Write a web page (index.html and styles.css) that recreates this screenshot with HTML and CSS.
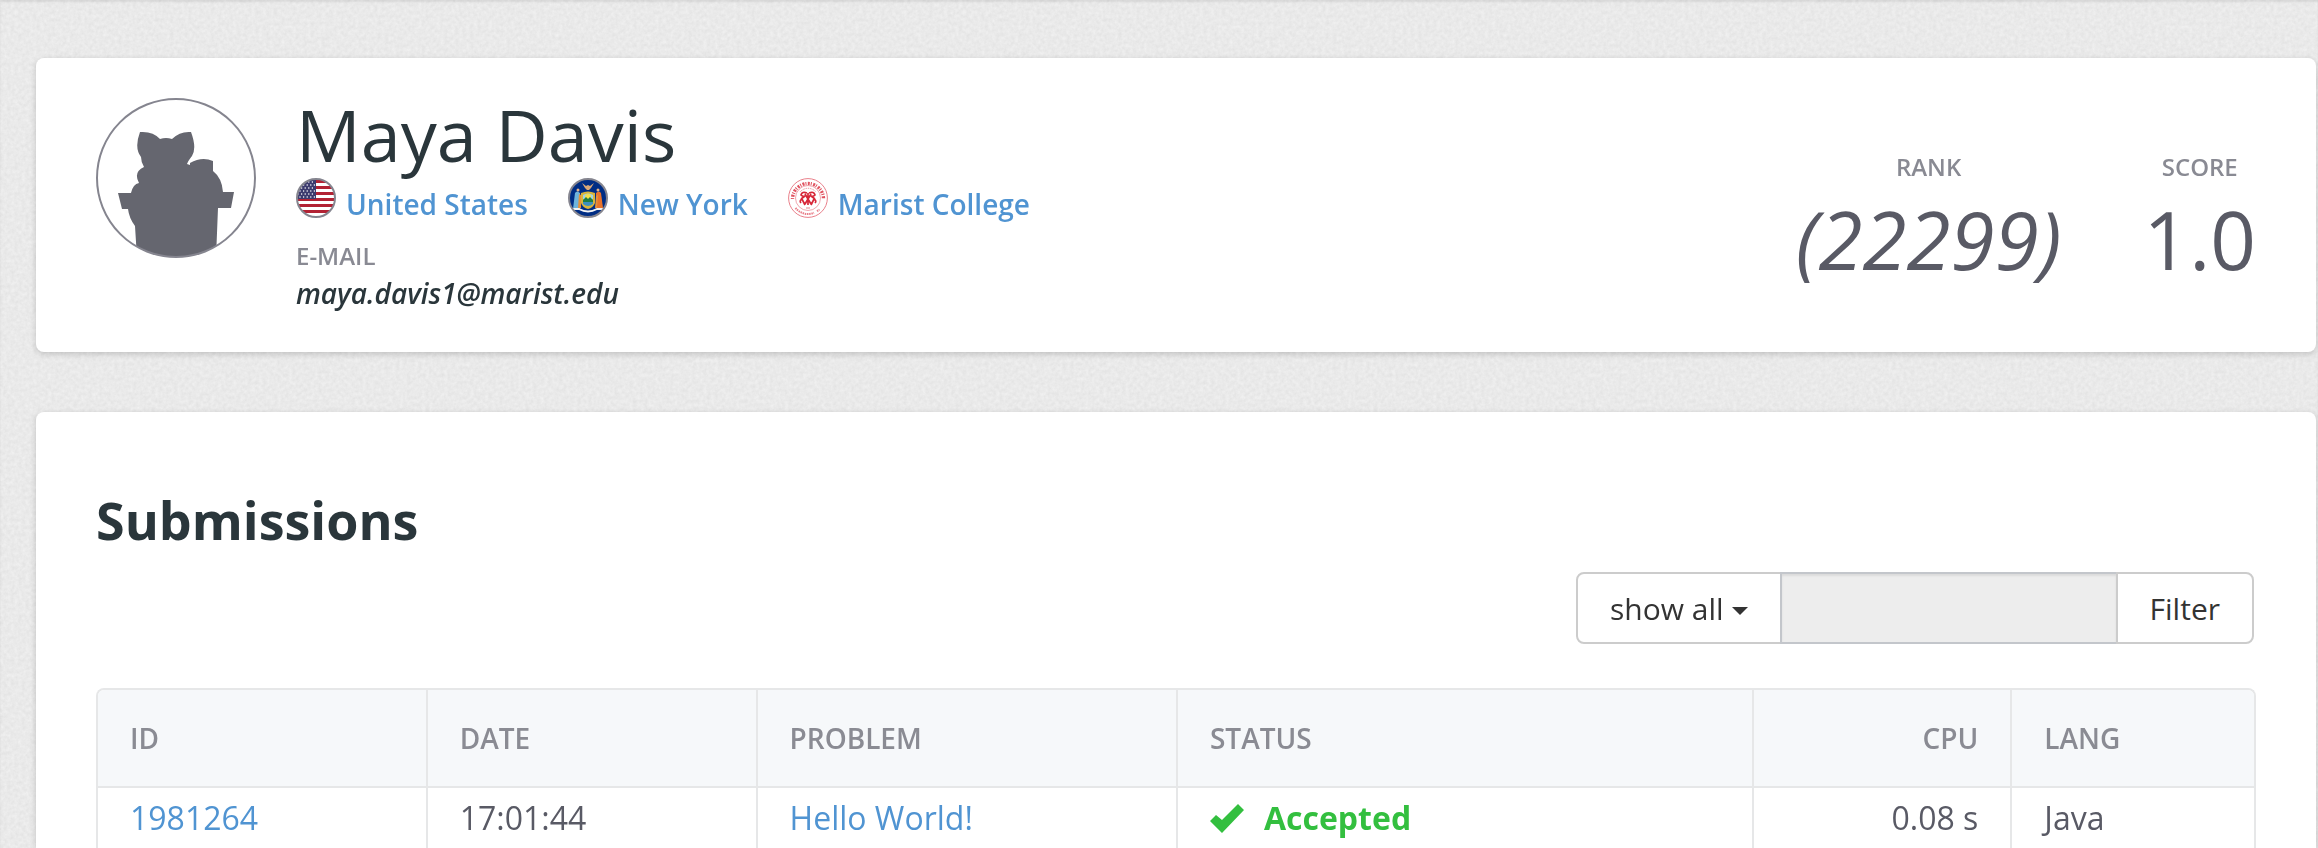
FILE: index.html
```html
<!DOCTYPE html>
<html lang="en">
<head>
<meta charset="utf-8">
<title>Maya Davis</title>
<link rel="stylesheet" href="styles.css">
</head>
<body>
<svg class="texture" aria-hidden="true">
  <filter id="grain" x="0" y="0" width="100%" height="100%" color-interpolation-filters="sRGB">
    <feTurbulence type="fractalNoise" baseFrequency="0.27" numOctaves="3" seed="4"/>
    <feColorMatrix type="matrix" values="0.07 0 0 0 0.881  0.07 0 0 0 0.881  0.07 0 0 0 0.881  0 0 0 0 1"/>
  </filter>
  <rect width="100%" height="100%" filter="url(#grain)"/>
</svg>
<main class="page">
  <section class="card profile">
    <svg class="avatar" viewBox="0 0 160 160" role="img" aria-label="Profile picture">
      <defs><clipPath id="round"><circle cx="80" cy="80" r="79"/></clipPath></defs>
      <path clip-path="url(#round)" fill="#65666f" d="M44 34Q57 33 64 41Q70 39 76 41Q84 33 95 34Q101 50 96 58Q92 63 91 66L94 67L94 65Q106 58 117 63V73Q126 80 127 94H138L135 110H122L120 160H41L39 128Q33 120 32 111H26L22 95L35 95Q37 86 43 85Q37 74 48 69Q45 64 45 59Q38 50 44 34Z"/>
      <circle cx="80" cy="80" r="79" fill="none" stroke="#85858f" stroke-width="2"/>
    </svg>
    <div class="identity">
      <h1 class="name">Maya Davis</h1>
      <ul class="places">
        <li class="place">
          <svg class="flag" viewBox="0 0 40 40" aria-hidden="true">
            <defs><clipPath id="disc"><circle cx="20" cy="20" r="19"/></clipPath></defs>
            <g clip-path="url(#disc)">
              <rect width="40" height="40" fill="#fff"/>
              <path stroke="#b22234" stroke-width="3" d="M0 3.5H40M0 9.5H40M0 15.5H40M0 21.5H40M0 27.5H40M0 33.5H40M0 39.5H40"/>
              <rect width="20" height="21" fill="#3c3b6e"/>
              <path stroke="#fff" stroke-width="1.5" stroke-linecap="round" stroke-dasharray="0 3.6" d="M2 4H19M4 7H19M2 10H19M4 13H19M2 16H19M4 19H19"/>
            </g>
            <circle cx="20" cy="20" r="19" fill="none" stroke="#85858f" stroke-width="2"/>
          </svg>
          <a class="place-link" href="#">United States</a>
        </li>
        <li class="place">
          <svg class="flag" viewBox="0 0 40 40" aria-hidden="true">
            <circle cx="20" cy="20" r="19" fill="#002d84"/>
            <path fill="#d9a878" d="M14 5L18 8L20 7L22 8L26 5L23 10L21 12H19L17 10Z"/>
            <path fill="#d9b53c" d="M13 15Q20 12 27 15V25Q25 30 20 31Q15 30 13 25Z"/>
            <path fill="#9fd4e6" d="M15 17Q20 14 25 17V21H15Z"/>
            <circle cx="20" cy="19" r="3" fill="#f5e04a"/>
            <path fill="#1e7d45" d="M15 22L18 19L20 21L22 19L25 22V24H15Z"/>
            <path fill="#3a8fc0" d="M15 24H25V26Q20 30 15 26Z"/>
            <path fill="#6fb4dc" d="M7 15Q9 12 12 15L12 31H5Z"/>
            <path fill="#e8742c" d="M28 15Q31 12 33 15L35 30H28Z"/>
            <path fill="#e6913a" d="M11 16L13 17V30H10ZM28 18L30 17L29 30H27Z"/>
            <circle cx="10" cy="12" r="1.5" fill="#e5b48c"/><circle cx="30" cy="12" r="1.5" fill="#e5b48c"/>
            <path fill="none" stroke="#f4f4f4" stroke-width="2" d="M4 31H11Q20 36 29 31H36"/>
            <circle cx="20" cy="20" r="19" fill="none" stroke="#85858f" stroke-width="2"/>
          </svg>
          <a class="place-link" href="#">New York</a>
        </li>
        <li class="place">
          <svg class="flag" viewBox="0 0 40 40" aria-hidden="true">
            <g fill="none" stroke="#e9808b">
              <circle cx="20" cy="20" r="19.4" stroke-width="1"/>
              <path stroke="#e0525f" stroke-width="3.4" stroke-dasharray="1 1.4 2 1" d="M4.500 21A15.500 15.500 0 1 1 35.500 21"/>
              <path stroke-width="2" stroke-dasharray="1.500 .7" d="M7.500 30A16 16 0 0 0 26 34.800M29 33.200L31.500 31.500"/>
              <circle cx="20" cy="20" r="12.500" stroke-width=".7"/>
              <path stroke-width="1" stroke-dasharray="1 .8" d="M12 14A10.500 10.500 0 0 1 28 14"/>
            </g>
            <path fill="none" stroke="#d72638" stroke-width="1.700" d="M19 15Q14 13 13 17Q15 19 17 18L13 21M21 15Q26 13 27 17Q25 19 23 18L27 21M17 16L23 26M23 16L17 26M13 25Q11 23 14 21L17 27M27 25Q29 23 26 21L23 27M20 15V27"/>
            <path stroke="#e9808b" d="M18 30H22"/>
          </svg>
          <a class="place-link" href="#">Marist College</a>
        </li>
      </ul>
      <dl class="contact">
        <dt class="label">E-MAIL</dt>
        <dd class="email">maya.davis1@marist.edu</dd>
      </dl>
    </div>
    <dl class="stats">
      <div class="stat"><dt class="label">RANK</dt><dd class="figure figure-unranked">(22299)</dd></div>
      <div class="stat"><dt class="label">SCORE</dt><dd class="figure">1.0</dd></div>
    </dl>
  </section>

  <section class="card submissions">
    <h2 class="heading">Submissions</h2>
    <form class="filter">
      <button class="filter-button filter-menu" type="button">show all <span class="caret"></span></button>
      <input class="filter-input" type="text" aria-label="Filter value" disabled>
      <button class="filter-button filter-submit" type="submit">Filter</button>
    </form>
    <div class="table-frame">
      <table class="table">
        <colgroup><col class="col-id"><col class="col-date"><col class="col-problem"><col class="col-status"><col class="col-cpu"><col class="col-lang"></colgroup>
        <thead>
          <tr><th>ID</th><th>DATE</th><th>PROBLEM</th><th>STATUS</th><th class="numeric">CPU</th><th>LANG</th></tr>
        </thead>
        <tbody>
          <tr>
            <td><a href="#">1981264</a></td>
            <td>17:01:44</td>
            <td><a href="#">Hello World!</a></td>
            <td><span class="accepted"><svg class="check" viewBox="0 0 34 30" aria-hidden="true"><path fill="currentColor" d="M0 18L6 12L12 17L28 1L34 7L12 30Z"/></svg>Accepted</span></td>
            <td class="numeric">0.08 s</td>
            <td>Java</td>
          </tr>
        </tbody>
      </table>
    </div>
  </section>
</main>
</body>
</html>
```
FILE: styles.css
```css
* { box-sizing: border-box; }
body {
  margin: 0;
  background: #e9e9e9;
  color: #595a65;
  font-family: "Open Sans", "Noto Sans", sans-serif;
  font-size: 32px;
  line-height: 44px;
}
h1, h2, dl, dd, ul { margin: 0; padding: 0; }
a { color: #5094d2; text-decoration: none; }

.texture { position: fixed; inset: 0; width: 100%; height: 100%; z-index: -1; }
.page {
  display: flex;
  flex-direction: column;
  gap: 60px;
  padding: 58px 2px 0 36px;
  box-shadow: inset 0 2px 2px rgba(0, 0, 0, .08);
}
.card {
  padding: 40px 60px;
  background: #fff;
  border-radius: 8px;
  box-shadow: 0 2px 6px rgba(0, 0, 0, .18);
}

.profile { display: flex; align-items: flex-start; gap: 40px; }
.avatar { flex: none; width: 160px; height: 160px; }
.identity { flex: 1; }
.name { padding-bottom: 4px; color: #2a363b; font-size: 72px; font-weight: 400; line-height: 72px; }
.places { display: flex; gap: 40px; list-style: none; }
.place { display: flex; align-items: flex-start; gap: 10px; }
.flag { width: 40px; height: 40px; margin-top: 4px; }
.place-link { padding-top: 10px; font-size: 28px; font-weight: 600; line-height: 40px; }
.contact { padding-top: 14px; }
.label { color: #898a93; font-size: 24px; font-weight: 600; line-height: 36px; }
.email { color: #2a363b; font-size: 28px; font-style: italic; font-weight: 600; line-height: 38px; }
.stats { display: flex; gap: 82px; padding-top: 51px; text-align: center; }
.figure { font-size: 80px; line-height: 108px; }
.figure-unranked { font-style: italic; }

.submissions { padding-top: 72px; padding-bottom: 0; border-radius: 8px 8px 0 0; }
.heading { color: #2a363b; font-size: 52px; font-weight: 700; line-height: 72px; }
.filter { display: flex; justify-content: flex-end; padding: 16px 2px 44px 0; }
.filter-button {
  height: 72px;
  padding: 0 32px;
  border: 2px solid #ccc;
  background: #fff;
  color: #333;
  font: 400 30px "Open Sans", sans-serif;
}
.filter-menu { display: flex; align-items: center; gap: 8px; border-radius: 8px 0 0 8px; }
.caret { margin-top: 6px; border: 8px solid transparent; border-top-color: #333; border-bottom: 0; }
.filter-input {
  width: 338px;
  margin: 0 -2px;
  border: 2px solid #c3c6cb;
  background: #ededed;
  box-shadow: inset 0 2px 2px rgba(0, 0, 0, .08);
}
.filter-submit { border-radius: 0 8px 8px 0; }

.table-frame { border: 2px solid #e6e7e8; border-bottom: 0; border-radius: 8px 8px 0 0; overflow: hidden; }
.table { width: 100%; border-collapse: separate; border-spacing: 0; table-layout: fixed; }
.table th, .table td { padding: 8px 32px; border-left: 2px solid #e6e7e8; text-align: left; white-space: nowrap; }
.table th:first-child, .table td:first-child { border-left: 0; }
.table th {
  height: 98px;
  border-bottom: 2px solid #e6e7e8;
  background: #f6f8fa;
  color: #8a8b93;
  font-size: 28px;
  font-weight: 600;
}
.table .numeric { text-align: right; }
.col-id { width: 15.2%; }
.col-date { width: 15.3%; }
.col-problem { width: 19.5%; }
.col-status { width: 26.7%; }
.col-cpu { width: 12%; }
.accepted { display: flex; align-items: center; gap: 20px; color: #33bf3f; font-weight: 700; }
.check { width: 34px; height: 30px; }
```
